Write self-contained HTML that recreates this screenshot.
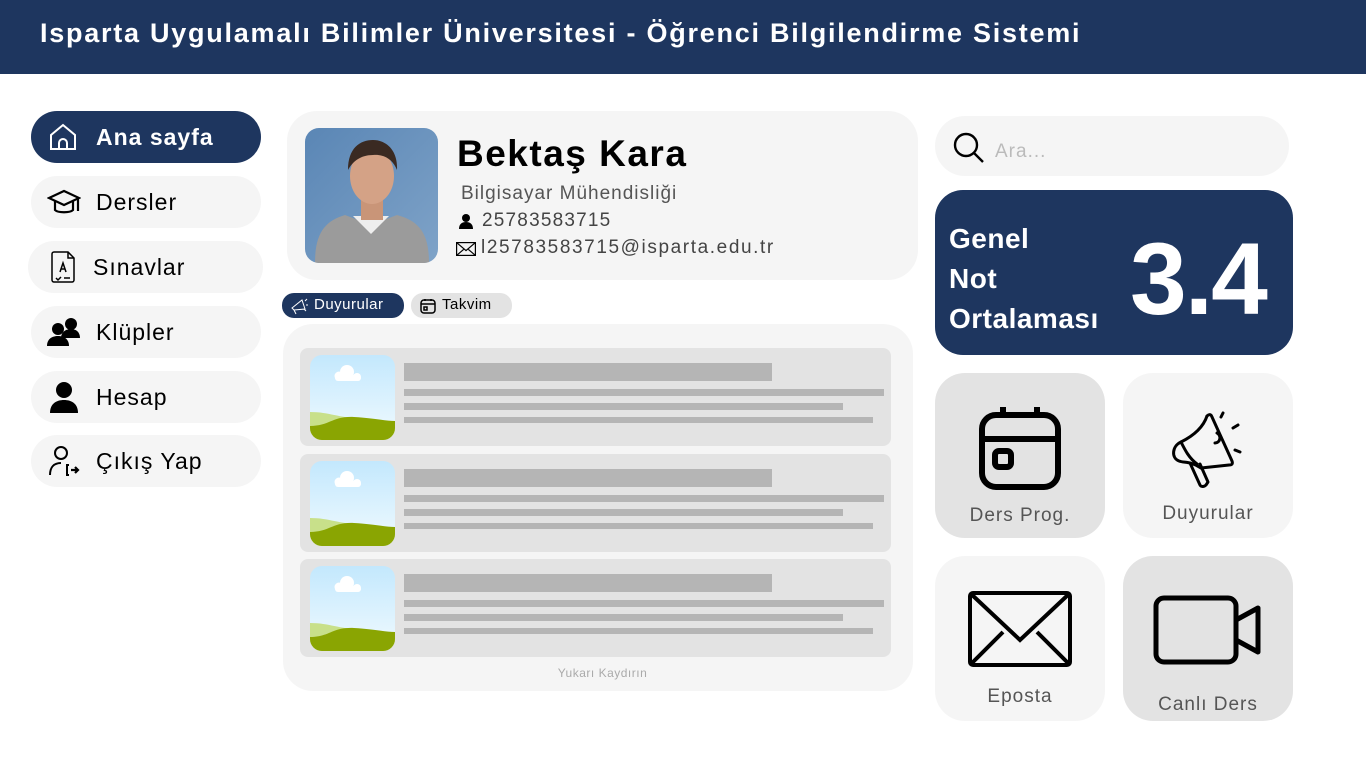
<!DOCTYPE html>
<html><head><meta charset="utf-8"><style>
*{margin:0;padding:0;box-sizing:border-box}
body{width:1366px;height:769px;background:#fff;font-family:"Liberation Sans",sans-serif;position:relative;overflow:hidden;color:#000}
.a{position:absolute}
.hdr{left:0;top:0;width:1366px;height:74px;background:#1e365f;color:#fff;font-weight:bold;font-size:27px;padding:18px 0 0 40px;letter-spacing:1.75px}
.nav{left:31px;width:230px;height:52px;border-radius:26px;background:#f5f5f5;font-size:23px;display:flex;align-items:center;letter-spacing:1px}
.nav svg{position:absolute;left:16px}
.nav span{position:absolute;left:65px}
.card{background:#f5f5f5;border-radius:30px}
.item{left:300px;width:591px;height:98px;background:#e3e3e3;border-radius:8px}
.bar{position:absolute;background:#b5b5b5}
.tile{width:170px;height:165px;border-radius:30px;text-align:center;font-size:19px;color:#555;letter-spacing:1px}
</style></head><body>
<div class="a hdr">Isparta Uygulamalı Bilimler Üniversitesi - Öğrenci Bilgilendirme Sistemi</div>

<div class="a nav" style="top:111px;background:#1e365f;color:#fff;font-weight:bold"><svg width="32" height="32" viewBox="0 0 32 32" fill="none" stroke="#fff" stroke-width="2"><path d="M4 14L16 4l12 10v14H4z"/><path d="M12 28v-6a4 4 0 018 0v6"/></svg><span>Ana sayfa</span></div>
<div class="a nav" style="top:176px"><svg width="34" height="32" viewBox="0 0 34 32" fill="none" stroke="#000" stroke-width="2.2"><path d="M2 12L17 5l15 7-15 7z"/><path d="M8 15v9c3 3 15 3 18 0v-9"/><path d="M31 12v13"/></svg><span>Dersler</span></div>
<div class="a nav" style="top:241px;left:28px;width:235px"><svg width="32" height="34" viewBox="0 0 32 34" fill="none" stroke="#000" stroke-width="1.5" style="left:20px"><path d="M6 2h14l6 6v22a2 2 0 01-2 2H6a2 2 0 01-2-2V4a2 2 0 012-2z"/><path d="M20 2v6h6"/><path d="M12 22l3-9 3 9M13 19h4M8 28l2 2 3-3M16 28h6"/></svg><span style="left:65px">Sınavlar</span></div>
<div class="a nav" style="top:306px"><svg width="34" height="32" viewBox="0 0 34 32" fill="#000"><circle cx="24" cy="8" r="6"/><path d="M14 22c0-6 5-9 10-9s9 3 9 9z"/><circle cx="11" cy="13" r="6"/><path d="M0 30c0-7 5-10 11-10s11 3 11 10z"/></svg><span>Klüpler</span></div>
<div class="a nav" style="top:371px"><svg width="34" height="34" viewBox="0 0 34 34" fill="#000"><circle cx="17" cy="10" r="8"/><path d="M3 33c0-9 6-13 14-13s14 4 14 13z"/></svg><span>Hesap</span></div>
<div class="a nav" style="top:435px"><svg width="34" height="34" viewBox="0 0 34 34" fill="none" stroke="#000" stroke-width="2"><circle cx="14" cy="9" r="6"/><path d="M3 31c0-8 4-12 11-12"/><path d="M22 21h-2v10h2"/><path d="M24 26h7M28 23l3 3-3 3" stroke-width="2.2"/></svg><span>Çıkış Yap</span></div>

<div class="a card" style="left:287px;top:111px;width:631px;height:169px"></div>
<svg class="a" style="left:305px;top:128px" width="133" height="135"><defs><clipPath id="ph"><rect width="133" height="135" rx="14"/></clipPath><linearGradient id="bg" x1="0" y1="0" x2="1" y2="1"><stop offset="0" stop-color="#5a86b5"/><stop offset="1" stop-color="#7fa3c8"/></linearGradient></defs><g clip-path="url(#ph)"><rect width="133" height="135" fill="url(#bg)"/><path d="M10 135c0-30 10-42 30-48l26 10 26-10c22 6 32 18 32 48z" fill="#9b9b9b"/><path d="M48 88l18 18 18-18z" fill="#eee"/><rect x="56" y="70" width="22" height="22" fill="#c99578"/><ellipse cx="67" cy="48" rx="22" ry="28" fill="#d4a286"/><path d="M43 42c0-22 12-30 25-30s25 10 24 30c-4-10-12-16-24-15-12 0-20 6-25 15z" fill="#3a2a22"/></g></svg>
<div class="a" style="left:457px;top:133px;font-size:37px;font-weight:bold;letter-spacing:1.5px">Bektaş Kara</div>
<div class="a" style="left:461px;top:183px;font-size:19px;color:#555;letter-spacing:1px">Bilgisayar Mühendisliği</div>
<svg class="a" style="left:458px;top:213px" width="16" height="16" fill="#000"><circle cx="8" cy="5" r="4"/><path d="M1 16c0-5 3-7 7-7s7 2 7 7z"/></svg>
<div class="a" style="left:482px;top:210px;font-size:19px;color:#444;letter-spacing:1.2px">25783583715</div>
<svg class="a" style="left:456px;top:242px" width="20" height="14" fill="none" stroke="#000" stroke-width="1.2"><rect x=".6" y=".6" width="18.8" height="12.8"/><path d="M.6 .6l9.4 8 9.4-8M.6 13.4l7-6M19.4 13.4l-7-6"/></svg>
<div class="a" style="left:481px;top:237px;font-size:19px;color:#444;letter-spacing:1.6px">l25783583715@isparta.edu.tr</div>

<div class="a" style="left:282px;top:293px;width:122px;height:25px;border-radius:12px;background:#1e365f;color:#fff;font-size:15px;padding:3px 0 0 32px;letter-spacing:.5px">Duyurular</div>
<svg class="a" style="left:289px;top:297px" width="20" height="18" fill="none" stroke="#fff" stroke-width="1"><path d="M3 11l10-8 3 9-11 1z M5 13l2 4M16 4l2-2M17 8h2M15 12l2 2"/></svg>
<div class="a" style="left:411px;top:293px;width:101px;height:25px;border-radius:12px;background:#e3e3e3;font-size:15px;padding:3px 0 0 31px;letter-spacing:.5px">Takvim</div>
<svg class="a" style="left:420px;top:298px" width="16" height="16" fill="none" stroke="#000" stroke-width="1.5"><rect x="1" y="2" width="14" height="13" rx="3"/><path d="M1 6h14M5 1v2M11 1v2"/><rect x="4" y="9" width="3" height="3"/></svg>

<div class="a card" style="left:283px;top:324px;width:630px;height:367px"></div>
<div id="items"></div>
<div class="a" style="left:283px;top:666px;width:639px;text-align:center;font-size:12px;color:#aaa;letter-spacing:.5px">Yukarı Kaydırın</div>

<div class="a card" style="left:935px;top:116px;width:354px;height:60px"></div>
<svg class="a" style="left:952px;top:131px" width="34" height="34" fill="none" stroke="#000" stroke-width="2.4"><circle cx="14" cy="14" r="11"/><path d="M22 22l9 9"/></svg>
<div class="a" style="left:995px;top:141px;font-size:19px;color:#bbb;letter-spacing:1px">Ara...</div>

<div class="a" style="left:935px;top:190px;width:358px;height:165px;border-radius:28px;background:#1e365f"></div>
<div class="a" style="left:949px;top:219px;font-size:28px;font-weight:bold;color:#fff;line-height:40px;letter-spacing:.5px">Genel<br>Not<br>Ortalaması</div>
<div class="a" style="left:1130px;top:222px;font-size:102px;font-weight:bold;color:#fff;line-height:114px;letter-spacing:-2px">3.4</div>

<div class="a tile" style="left:935px;top:373px;background:#e3e3e3"><svg style="margin-top:30px" width="90" height="90" viewBox="0 0 90 90" fill="none" stroke="#000" stroke-width="6"><rect x="7" y="12" width="76" height="72" rx="14"/><path d="M7 36h76M28 4v10M62 4v10"/><rect x="20" y="48" width="16" height="16" rx="4"/></svg><div style="margin-top:6px">Ders Prog.</div></div>
<div class="a tile" style="left:1123px;top:373px;background:#f5f5f5"></div>
<svg class="a" style="left:1163px;top:403px" width="90" height="90" viewBox="0 0 90 90" fill="none" stroke="#000" stroke-width="3" stroke-linecap="round" stroke-linejoin="round"><path d="M44 13c2-2 4-2 5 1l20 44c1 3 0 4-3 4l-28 3"/><path d="M44 13c-4 12-14 20-26 26"/><path d="M18 39c-9 4-10 16-2 19 5 2 12 0 22 7"/><path d="M18 39c4 8 8 16 16 22"/><path d="M27 60l10 22c1 2 4 2 6 0l2-3-8-18"/><path d="M52 40c5 0 7-7 2-10"/><path d="M60 10l-2 4M75 22l-5 3M72 47l5 2"/></svg>
<div class="a" style="left:1123px;top:503px;width:170px;text-align:center;font-size:19px;color:#555;letter-spacing:1px">Duyurular</div>
<div class="a tile" style="left:935px;top:556px;background:#f5f5f5"><svg style="margin-top:34px" width="106" height="78" viewBox="0 0 106 78" fill="none" stroke="#000" stroke-width="4"><rect x="3" y="3" width="100" height="72" rx="3"/><path d="M3 3l50 47 50-47M3 75l33-33M103 75l-33-33"/></svg><div style="margin-top:12px">Eposta</div></div>
<div class="a tile" style="left:1123px;top:556px;background:#e3e3e3"><svg style="margin-top:38px" width="112" height="72" viewBox="0 0 112 72" fill="none" stroke="#000" stroke-width="5" stroke-linejoin="round"><rect x="4" y="4" width="80" height="64" rx="8"/><path d="M84 26l22-12v44l-22-12z"/></svg><div style="margin-top:22px">Canlı Ders</div></div>

<script>
var h='';[348,454,559].forEach(function(t){h+='<div class="a item" style="top:'+t+'px"><svg style="position:absolute;left:10px;top:7px" width="85" height="85"><defs><clipPath id="c'+t+'"><rect width="85" height="85" rx="12"/></clipPath><linearGradient id="s'+t+'" x1="0" y1="0" x2="0" y2="1"><stop offset="0" stop-color="#c3e8fd"/><stop offset="1" stop-color="#f0faff"/></linearGradient></defs><g clip-path="url(#c'+t+')"><rect width="85" height="85" fill="url(#s'+t+')"/><path d="M0 57c20 0 28 6 50 6 15 0 20 8 35 8v14H0z" fill="#c8e08a"/><path d="M0 71c20 0 22-10 44-9 20 1 30 4 41 4v19H0z" fill="#8aa502"/><circle cx="37" cy="17" r="7" fill="#fff"/><circle cx="29" cy="21" r="4.5" fill="#fff"/><circle cx="47" cy="22" r="4" fill="#fff"/><rect x="25" y="20" width="26" height="6" rx="3" fill="#fff"/></g></svg><div class="bar" style="left:104px;top:15px;width:368px;height:18px"></div><div class="bar" style="left:104px;top:41px;width:480px;height:7px"></div><div class="bar" style="left:104px;top:55px;width:439px;height:7px"></div><div class="bar" style="left:104px;top:69px;width:469px;height:6px"></div></div>'});document.getElementById('items').innerHTML=h;
</script>
</body></html>
